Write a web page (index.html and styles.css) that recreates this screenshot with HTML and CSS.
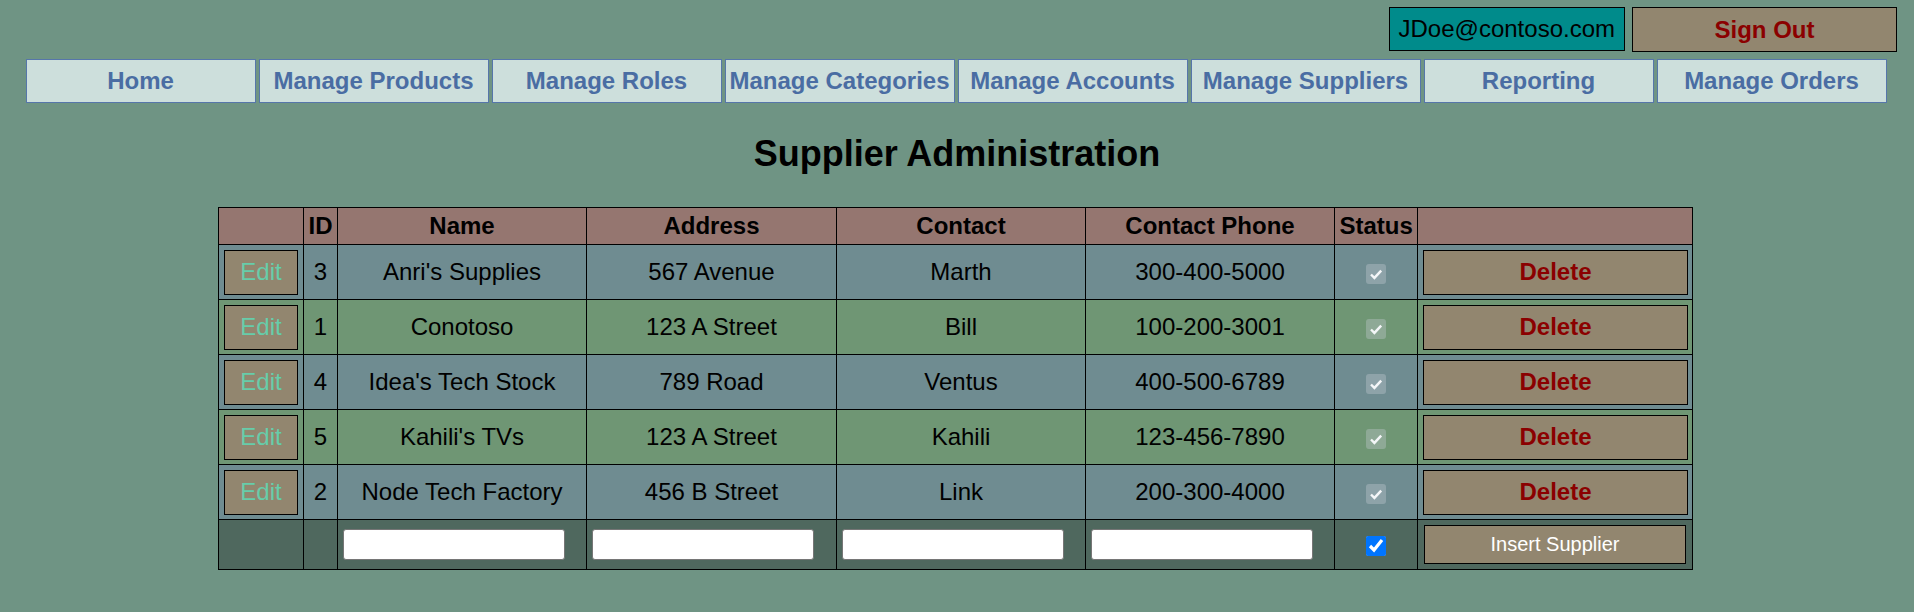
FILE: index.html
```html
<!DOCTYPE html>
<html lang="en">
<head>
<meta charset="utf-8">
<title>Supplier Administration</title>
<link rel="stylesheet" href="styles.css">
</head>
<body>
<header class="topbar">
  <span class="user">JDoe@contoso.com</span>
  <button class="btn signout" type="button">Sign Out</button>
</header>
<nav class="menu">
  <a class="menu-item" href="#">Home</a>
  <a class="menu-item" href="#">Manage Products</a>
  <a class="menu-item" href="#">Manage Roles</a>
  <a class="menu-item" href="#">Manage Categories</a>
  <a class="menu-item" href="#">Manage Accounts</a>
  <a class="menu-item" href="#">Manage Suppliers</a>
  <a class="menu-item" href="#">Reporting</a>
  <a class="menu-item" href="#">Manage Orders</a>
</nav>
<h2 class="title">Supplier Administration</h2>
<table class="grid">
  <colgroup>
    <col class="c-edit"><col class="c-id"><col class="c-name"><col class="c-addr"><col class="c-contact"><col class="c-phone"><col class="c-status"><col class="c-del">
  </colgroup>
  <thead>
    <tr class="head"><th></th><th>ID</th><th>Name</th><th>Address</th><th>Contact</th><th>Contact Phone</th><th>Status</th><th></th></tr>
  </thead>
  <tbody>
    <tr class="row odd"><td class="left"><button class="btn edit" type="button">Edit</button></td><td>3</td><td>Anri's Supplies</td><td>567 Avenue</td><td>Marth</td><td>300-400-5000</td><td><input class="chk ro" type="checkbox" checked disabled></td><td class="left"><button class="btn del" type="button">Delete</button></td></tr>
    <tr class="row even"><td class="left"><button class="btn edit" type="button">Edit</button></td><td>1</td><td>Conotoso</td><td>123 A Street</td><td>Bill</td><td>100-200-3001</td><td><input class="chk ro" type="checkbox" checked disabled></td><td class="left"><button class="btn del" type="button">Delete</button></td></tr>
    <tr class="row odd"><td class="left"><button class="btn edit" type="button">Edit</button></td><td>4</td><td>Idea's Tech Stock</td><td>789 Road</td><td>Ventus</td><td>400-500-6789</td><td><input class="chk ro" type="checkbox" checked disabled></td><td class="left"><button class="btn del" type="button">Delete</button></td></tr>
    <tr class="row even"><td class="left"><button class="btn edit" type="button">Edit</button></td><td>5</td><td>Kahili's TVs</td><td>123 A Street</td><td>Kahili</td><td>123-456-7890</td><td><input class="chk ro" type="checkbox" checked disabled></td><td class="left"><button class="btn del" type="button">Delete</button></td></tr>
    <tr class="row odd"><td class="left"><button class="btn edit" type="button">Edit</button></td><td>2</td><td>Node Tech Factory</td><td>456 B Street</td><td>Link</td><td>200-300-4000</td><td><input class="chk ro" type="checkbox" checked disabled></td><td class="left"><button class="btn del" type="button">Delete</button></td></tr>
  </tbody>
  <tfoot>
    <tr class="insert"><td></td><td></td><td class="left"><input class="field" type="text"></td><td class="left"><input class="field" type="text"></td><td class="left"><input class="field" type="text"></td><td class="left"><input class="field" type="text"></td><td><input class="chk" type="checkbox" checked></td><td class="left"><button class="btn ins" type="button">Insert Supplier</button></td></tr>
  </tfoot>
</table>
</body>
</html>
```
FILE: styles.css
```css
html, body {
  margin: 0;
  padding: 0;
}
body {
  background: #6f9484;
  font-family: "Liberation Sans", Arial, sans-serif;
  font-size: 24px;
  color: #000;
}
.topbar {
  display: flex;
  justify-content: flex-end;
  align-items: flex-start;
  gap: 7px;
  padding: 7px 17px 0 0;
}
.user {
  display: flex;
  align-items: center;
  height: 44px;
  box-sizing: border-box;
  padding: 0 9px;
  border: 1px solid #000;
  background: #008b8b;
  color: #000;
}
.btn {
  font-family: "Liberation Sans", Arial, sans-serif;
  background: #92866f;
  border: 1px solid #000;
  box-sizing: border-box;
  padding: 0;
  margin: 0;
  cursor: pointer;
}
.signout {
  width: 265px;
  height: 45px;
  font-size: 24px;
  font-weight: bold;
  color: #8b0000;
}
.menu {
  display: flex;
  gap: 3px;
  width: 1861px;
  margin: 7px 0 0 25.5px;
}
.menu-item {
  flex: 1 1 0;
  height: 44px;
  box-sizing: border-box;
  display: flex;
  align-items: center;
  justify-content: center;
  background: #cddfdc;
  border: 1px solid #5676aa;
  color: #4a6da3;
  font-weight: bold;
  text-decoration: none;
  white-space: nowrap;
}
.title {
  margin: 30px 0 32px;
  font-size: 36px;
  line-height: 42px;
  text-align: center;
  font-weight: bold;
}
.grid {
  margin: 0 0 0 218px;
  border-collapse: collapse;
  table-layout: fixed;
  width: 1475px;
  border: 1px solid #000;
}
.c-edit { width: 85px; }
.c-id { width: 34px; }
.c-name { width: 249px; }
.c-addr { width: 250px; }
.c-contact { width: 249px; }
.c-phone { width: 249px; }
.c-status { width: 83px; }
.c-del { width: 275px; }
.grid th, .grid td {
  border: 1px solid #000;
  padding: 0 4.5px;
  text-align: center;
  vertical-align: middle;
  white-space: nowrap;
}
.grid th {
  font-weight: bold;
}
.grid .left {
  text-align: left;
  padding-left: 5px;
}
.head {
  height: 37px;
  background: #957670;
}
.row {
  height: 55px;
}
.odd {
  background: #6f8c91;
}
.even {
  background: #6f9674;
}
.insert {
  height: 50px;
  background: #4f685e;
}
.edit {
  width: 74px;
  height: 45px;
  font-size: 24px;
  color: #66cdaa;
  display: block;
}
.del {
  width: 265px;
  height: 45px;
  font-size: 24px;
  font-weight: bold;
  color: #8b0000;
  display: block;
}
.ins {
  width: 262px;
  height: 39px;
  font-size: 20px;
  color: #fff;
  margin-left: 1px;
  display: block;
}
.chk {
  width: 20px;
  height: 20px;
  margin: 0;
  vertical-align: middle;
}
.chk.ro {
  appearance: none;
  -webkit-appearance: none;
  border-radius: 3px;
  background-color: rgba(200, 205, 215, 0.35);
  background-image: url("data:image/svg+xml,%3Csvg xmlns='http://www.w3.org/2000/svg' viewBox='0 0 20 20'%3E%3Cpath d='M5 10.5l3.4 3.4L15.2 6.6' fill='none' stroke='%23f4f6f8' stroke-width='2.4'/%3E%3C/svg%3E");
  background-size: 20px 20px;
  background-repeat: no-repeat;
}
.field {
  display: block;
  width: 222px;
  height: 31px;
  box-sizing: border-box;
  border: 1px solid #767676;
  border-radius: 3px;
  background: #fff;
  margin: 0;
  padding: 1px 3px;
  font-size: 20px;
}
```
